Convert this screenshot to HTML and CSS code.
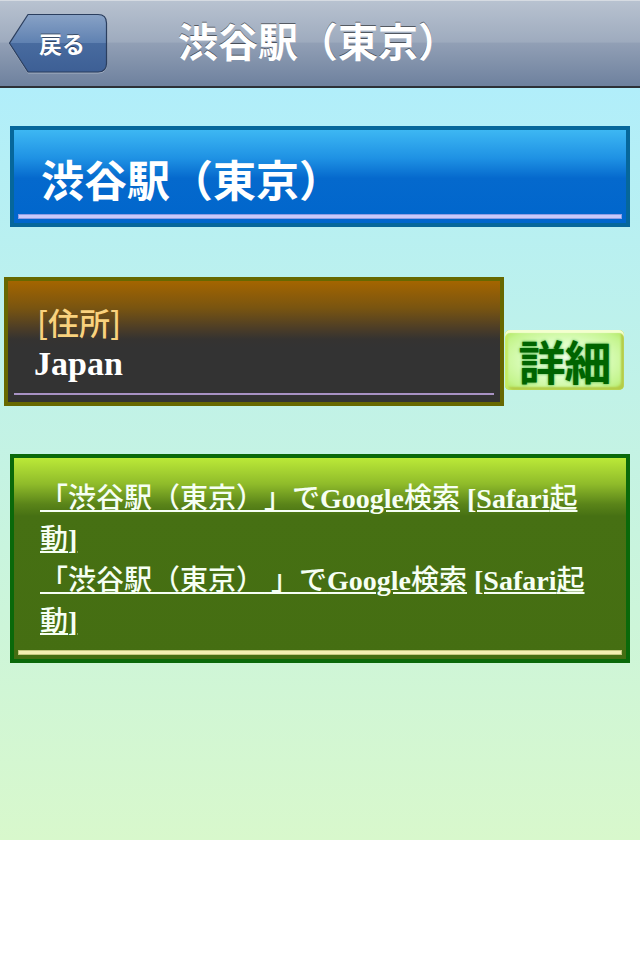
FILE: index.html
```html
<!DOCTYPE html>
<html lang="ja">
<head>
<meta charset="utf-8">
<title>渋谷駅（東京）</title>
<link rel="stylesheet" href="styles.css">
</head>
<body>
<div class="navbar">
  <div class="back">
    <svg class="back-shape" width="100" height="62" viewBox="0 0 100 62">
      <defs>
        <linearGradient id="bg" x1="0" y1="0" x2="0" y2="1">
          <stop offset="0" stop-color="#88a2c6"/>
          <stop offset="0.5" stop-color="#5f81b1"/>
          <stop offset="0.5" stop-color="#486b9f"/>
          <stop offset="1" stop-color="#3d5f95"/>
        </linearGradient>
      </defs>
      <path d="M20,2.5 H90 Q98.5,2.5 98.5,11 V51.5 Q98.5,60 90,60 H20 L1.5,31.2 Z" fill="none" stroke="rgba(255,255,255,0.35)" stroke-width="1"/>
      <path d="M20,1.5 H90 Q98.5,1.5 98.5,10 V50.5 Q98.5,59 90,59 H20 L1.5,30.2 Z" fill="url(#bg)" stroke="#2b3e5e" stroke-width="1.2" stroke-linejoin="round"/>
    </svg>
    <span class="back-label">戻る</span>
  </div>
  <div class="nav-title">渋谷駅（東京）</div>
</div>
<div class="content">
  <div class="title-box">
    <div class="title-text">渋谷駅（東京）</div>
    <div class="title-rule"></div>
  </div>
  <div class="addr-row">
    <div class="addr-box">
      <div class="addr-label">[住所]</div>
      <div class="addr-value">Japan</div>
      <div class="addr-rule"></div>
    </div>
    <a class="detail-btn">詳細</a>
  </div>
  <div class="link-box">
    <div class="link-line"><a class="link"><span class="jp">「渋谷駅（東京）」で</span>Google<span class="jp">検索</span></a> <a class="link">[Safari<span class="jp">起動</span>]</a></div>
    <div class="link-line"><a class="link"><span class="jp">「渋谷駅（東京）</span> <span class="jp">」で</span>Google<span class="jp">検索</span></a> <a class="link">[Safari<span class="jp">起動</span>]</a></div>
    <div class="link-rule"></div>
  </div>
</div>
</body>
</html>
```
FILE: styles.css
```css
* { box-sizing: border-box; }
html, body { margin: 0; padding: 0; background: #ffffff; }
body {
  font-family: "Liberation Serif", "Noto Sans CJK JP", serif;
  text-spacing-trim: space-all;
}

.navbar {
  display: flex;
  align-items: flex-start;
  height: 88px;
  border-top: 1px solid #d6dbe2;
  border-bottom: 2px solid #2d3137;
  background: linear-gradient(#b8c2d0 0%, #9eabbe 48%, #919fb5 50%, #6e819e 100%);
}
.back {
  position: relative;
  width: 100px;
  height: 62px;
  margin: 12px 0 0 8px;
  flex: none;
}
.back-shape { position: absolute; left: 0; top: 0; }
.back-label {
  position: absolute;
  left: 31px;
  top: 0;
  line-height: 60px;
  font-family: "Noto Sans CJK JP", sans-serif;
  font-weight: bold;
  font-size: 23px;
  color: #ffffff;
  text-shadow: 0 -1px 0 rgba(0,0,0,0.45);
}
.nav-title {
  margin-left: 70px;
  line-height: 78px;
  font-family: "Noto Sans CJK JP", sans-serif;
  font-weight: bold;
  font-size: 40px;
  color: #ffffff;
  text-shadow: 0 -1px 0 rgba(0,0,0,0.5);
  white-space: nowrap;
}

.content {
  height: 752px;
  padding-top: 38px;
  background: linear-gradient(#b1eefa 0%, #d8f8cc 100%);
}

.title-box {
  margin: 0 10px;
  border: 4px solid #06679b;
  background: linear-gradient(#3db7f3 0%, #1f92e4 30%, #0569cd 52%, #0066cc 100%);
}
.title-text {
  padding: 25px 0 0 27px;
  line-height: 46px;
  font-family: "Noto Sans CJK JP", sans-serif;
  font-weight: bold;
  font-size: 43px;
  color: #ffffff;
  white-space: nowrap;
}
.title-rule {
  height: 5px;
  margin: 13px 4px 4px;
  background: #c8c9fa;
  border: 1px solid #8d9de6;
}

.addr-row {
  display: flex;
  align-items: flex-start;
  margin-top: 50px;
  padding-left: 4px;
}
.addr-box {
  width: 500px;
  flex: none;
  border: 4px solid #676800;
  padding: 19px 0 7px;
  background: linear-gradient(#a46500 0%, #7a5510 22%, #4a3c28 40%, #353331 48%, #333333 55%, #333333 100%);
}
.jp { font-family: "Noto Sans CJK JP", sans-serif; font-weight: normal; }
.addr-label {
  padding-left: 29px;
  line-height: 44px;
  font-family: "Noto Sans CJK JP", sans-serif;
  font-size: 31px;
  font-weight: 500;
  color: #f9d27e;
}
.addr-value {
  padding-left: 26px;
  line-height: 40px;
  font-size: 34px;
  font-weight: bold;
  color: #ffffff;
}
.addr-rule {
  height: 2px;
  margin: 9px 6px 0;
  background: #a892c4;
}
.detail-btn {
  display: block;
  flex: none;
  width: 119px;
  height: 60px;
  margin: 53px 0 0 1px;
  border-radius: 5px;
  background: radial-gradient(ellipse at 50% 50%, #f6ffec 0%, #e0ffc8 40%, #c4f48c 80%, #b0e458 100%);
  box-shadow: inset 0 3px 1px #f4ffd0, inset 3px 0 2px #c4ec60, inset -3px -3px 2px #b4cc48;
  font-family: "Noto Sans CJK JP", sans-serif;
  font-weight: bold;
  font-size: 47px;
  line-height: 60px;
  letter-spacing: -1px;
  text-align: center;
  color: #006400;
  text-shadow: 0 0 3px #3fae3f;
}

.link-box {
  margin: 48px 10px 0;
  border: 4px solid #0a690a;
  padding: 19px 0 0;
  background: linear-gradient(#bbe938 0%, #8fbb2a 13%, #5a8419 23%, #467013 29%, #456e12 100%);
}
.link-line {
  padding: 0 26px;
  line-height: 38px;
  font-size: 28px;
  font-weight: bold;
}
.link {
  color: #f6fff4;
  text-decoration: underline;
  text-decoration-thickness: 2px;
  text-underline-offset: 2px;
}
.link .jp { font-weight: 500; }
.link-rule {
  height: 5px;
  margin: 9px 4px 4px;
  background: #f3efb2;
  border: 1px solid #c6c880;
}
```
